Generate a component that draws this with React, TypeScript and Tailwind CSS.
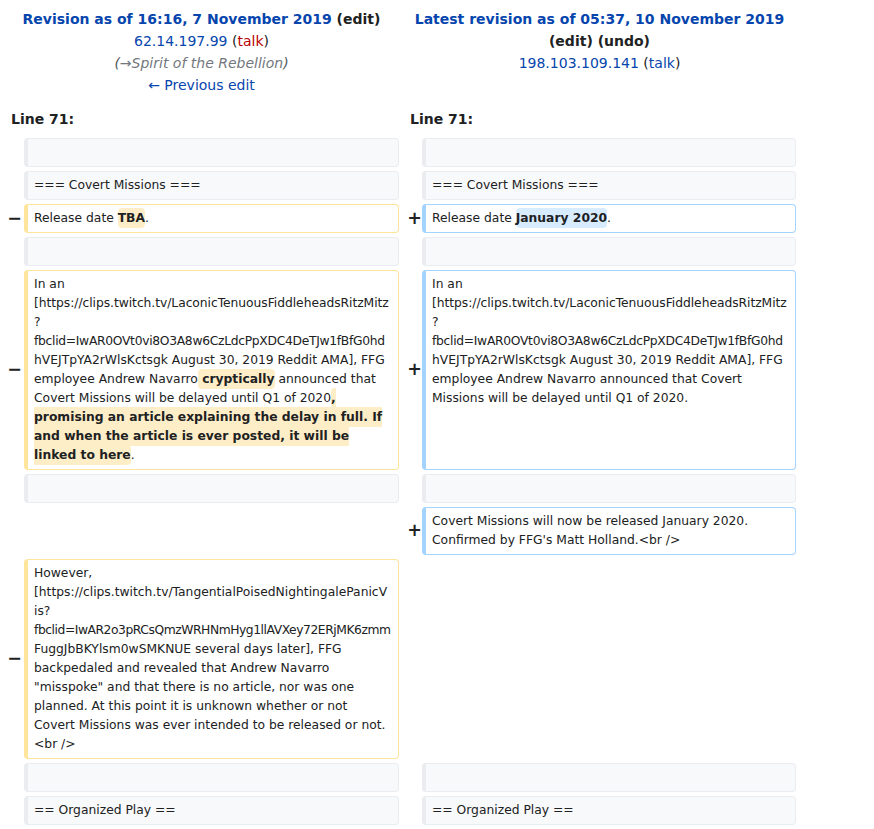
import React from "react";

const FONT = { fontFamily: '"DejaVu Sans", "Liberation Sans", sans-serif' };

const ctx =
  "rounded-[4px] border border-l-4 border-[#eaecf0] bg-[#f8f9fa] px-[6px] py-[4px] text-[12.32px] leading-[19px] text-[#202122] break-words";
const del =
  "rounded-[4px] border border-l-4 border-[#ffe49c] bg-white px-[6px] py-[4px] text-[12.32px] leading-[19px] text-[#202122] break-words";
const ins =
  "rounded-[4px] border border-l-4 border-[#a3d3ff] bg-white px-[6px] py-[4px] text-[12.32px] leading-[19px] text-[#202122] break-words";

function Del({ children }: { children: React.ReactNode }) {
  return (
    <span className="rounded-[4px] bg-[#feeec8] py-[3px] font-bold">{children}</span>
  );
}
function Ins({ children }: { children: React.ReactNode }) {
  return (
    <span className="rounded-[4px] bg-[#d8ecff] py-[3px] font-bold">{children}</span>
  );
}

function Minus() {
  return (
    <div className="flex items-center justify-end text-[17.5px] font-bold leading-none text-[#202122]">
      <span className="-mr-[2px]">−</span>
    </div>
  );
}
function Plus() {
  return (
    <div className="flex items-center justify-end text-[17.5px] font-bold leading-none text-[#202122]">
      <span className="-mr-[4px]">+</span>
    </div>
  );
}
function Blank() {
  return <div />;
}

export default function App() {
  return (
    <div className="min-h-[829px] w-[874px] bg-white text-[#202122]" style={FONT}>
      <div className="grid w-[804px] grid-cols-[16px_375px_15px_374px] gap-x-[4px] gap-y-[4px] px-[4px] pt-[4px]">
        {/* header */}
        <div className="col-span-2 pt-[4px] pb-[4px] text-center text-[14px] leading-[22px]">
          <div>
            <strong>
              <a className="text-[#0645ad]">Revision as of 16:16, 7 November 2019</a> (edit)
            </strong>
          </div>
          <div>
            <a className="text-[#0645ad]">62.14.197.99</a> (<a className="text-[#ba0000]">talk</a>)
          </div>
          <div className="italic text-[#54595d]">
            (<span className="text-[#72777d]">→Spirit of the Rebellion</span>)
          </div>
          <div>
            <a className="text-[#0645ad]">← Previous edit</a>
          </div>
        </div>
        <div className="col-span-2 pt-[4px] pb-[4px] text-center text-[14px] leading-[22px]">
          <div>
            <strong>
              <a className="text-[#0645ad]">Latest revision as of 05:37, 10 November 2019</a> (edit) (undo)
            </strong>
          </div>
          <div>
            <a className="text-[#0645ad]">198.103.109.141</a> (<a className="text-[#0645ad]">talk</a>)
          </div>
        </div>

        {/* line numbers */}
        <div className="col-span-2 pl-[7px] pt-[4px] pb-[4px] text-[14px] font-bold leading-[22px]">
          Line 71:
        </div>
        <div className="col-span-2 pl-[7px] pt-[4px] pb-[4px] text-[14px] font-bold leading-[22px]">
          Line 71:
        </div>

        {/* row 1: empty context */}
        <Blank />
        <div className={ctx}>&nbsp;</div>
        <Blank />
        <div className={ctx}>&nbsp;</div>

        {/* row 2 */}
        <Blank />
        <div className={ctx}>=== Covert Missions ===</div>
        <Blank />
        <div className={ctx}>=== Covert Missions ===</div>

        {/* row 3 */}
        <Minus />
        <div className={del}>
          Release date <Del>TBA</Del>.
        </div>
        <Plus />
        <div className={ins}>
          Release date <Ins>January 2020</Ins>.
        </div>

        {/* row 4 */}
        <Blank />
        <div className={ctx}>&nbsp;</div>
        <Blank />
        <div className={ctx}>&nbsp;</div>

        {/* row 5 */}
        <Minus />
        <div className={del}>
          In an
          <br />
          <span className="whitespace-nowrap tracking-[-0.05px]">
            [https://clips.twitch.tv/LaconicTenuousFiddleheadsRitzMitz
          </span>
          <br />?<br />
          <span className="whitespace-nowrap tracking-[-0.3px]">
            fbclid=IwAR0OVt0vi8O3A8w6CzLdcPpXDC4DeTJw1fBfG0hd
          </span>
          <br />
          hVEJTpYA2rWlsKctsgk August 30, 2019 Reddit AMA], FFG employee Andrew Navarro<Del> cryptically</Del>{" "}
          announced that Covert Missions will be delayed until Q1 of 2020
          <Del>
            , promising an article explaining the delay in full. If and when the article is ever posted, it
            will be linked to here
          </Del>
          .
        </div>
        <Plus />
        <div className={ins}>
          In an
          <br />
          <span className="whitespace-nowrap tracking-[-0.05px]">
            [https://clips.twitch.tv/LaconicTenuousFiddleheadsRitzMitz
          </span>
          <br />?<br />
          <span className="whitespace-nowrap tracking-[-0.3px]">
            fbclid=IwAR0OVt0vi8O3A8w6CzLdcPpXDC4DeTJw1fBfG0hd
          </span>
          <br />
          hVEJTpYA2rWlsKctsgk August 30, 2019 Reddit AMA], FFG employee Andrew Navarro announced that Covert
          Missions will be delayed until Q1 of 2020.
        </div>

        {/* row 6 */}
        <Blank />
        <div className={ctx}>&nbsp;</div>
        <Blank />
        <div className={ctx}>&nbsp;</div>

        {/* row 7 */}
        <div className="col-span-2" />
        <Plus />
        <div className={ins}>
          Covert Missions will now be released January 2020. Confirmed by FFG's Matt Holland.&lt;br /&gt;
        </div>

        {/* row 8 */}
        <Minus />
        <div className={del}>
          However,
          <br />
          <span className="whitespace-nowrap">[https://clips.twitch.tv/TangentialPoisedNightingalePanicV</span>
          <br />
          is?
          <br />
          <span className="whitespace-nowrap tracking-[-0.45px]">
            fbclid=IwAR2o3pRCsQmzWRHNmHyg1llAVXey72ERjMK6zmm
          </span>
          <br />
          FuggJbBKYlsm0wSMKNUE several days later], FFG backpedaled and revealed that Andrew Navarro
          "misspoke" and that there is no article, nor was one planned. At this point it is unknown whether or
          not Covert Missions was ever intended to be released or not.&lt;br /&gt;
        </div>
        <div className="col-span-2" />

        {/* row 9 */}
        <Blank />
        <div className={ctx}>&nbsp;</div>
        <Blank />
        <div className={ctx}>&nbsp;</div>

        {/* row 10 */}
        <Blank />
        <div className={ctx}>== Organized Play ==</div>
        <Blank />
        <div className={ctx}>== Organized Play ==</div>
      </div>
    </div>
  );
}
